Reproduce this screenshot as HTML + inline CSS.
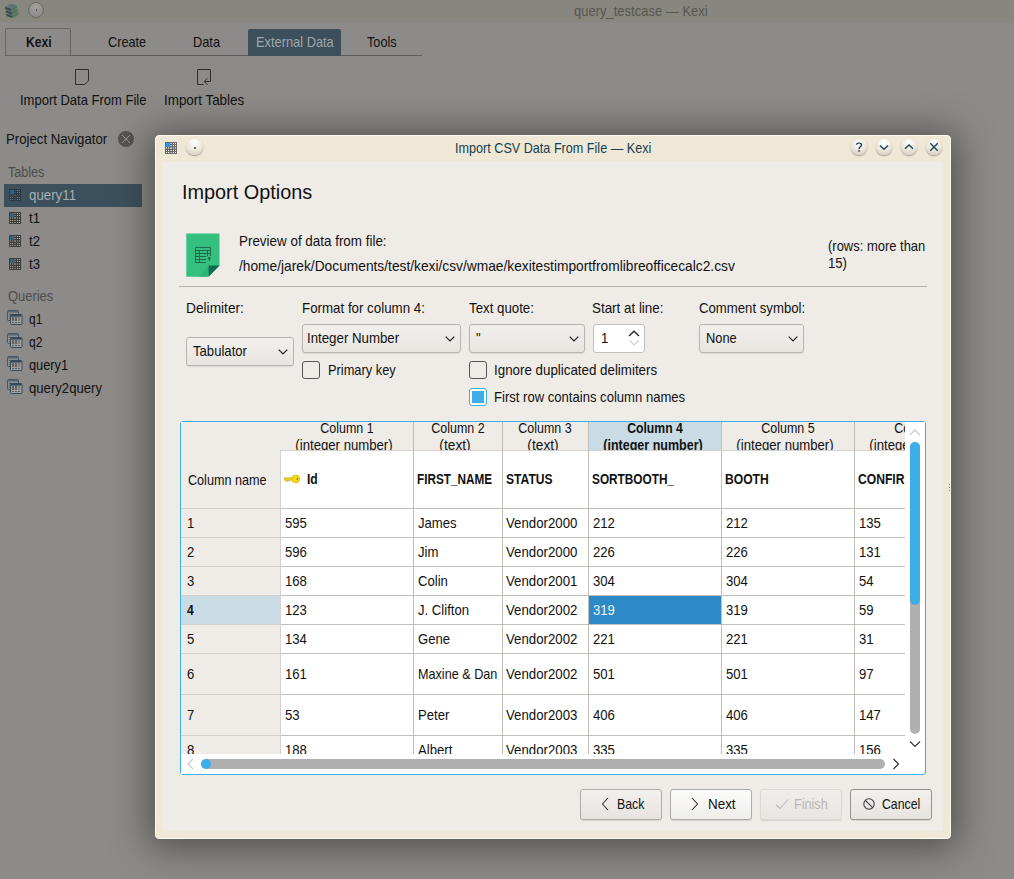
<!DOCTYPE html><html><head><meta charset="utf-8"><style>
*{margin:0;padding:0;box-sizing:border-box}
html,body{width:1014px;height:879px;overflow:hidden;background:#8c8b89;font-family:"Liberation Sans",sans-serif}
.t{position:absolute;white-space:nowrap;line-height:normal;transform-origin:0 0}
.r{position:absolute}
svg{position:absolute;overflow:visible}
</style></head><body><div class="r" style="left:0px;top:0px;width:1014px;height:22px;background:#87867f"></div>
<div class="t" style="left:573.50px;top:2.9000000000000004px;font-size:14.5px;color:#57564f;font-weight:normal;transform:scaleX(0.8967);">query_testcase — Kexi</div>
<svg style="left:0px;top:-1px" width="22" height="20" viewBox="0 0 22 20"><path d="M6.5 15 L12.5 11.5 L18.5 13.5 L12.5 17 Z" fill="#5f7378"/><path d="M6.5 15 L12.5 17 L12.5 19 L6.5 17 Z" fill="#34494f"/><path d="M12.5 17 L18.5 13.5 L18.5 15.5 L12.5 19 Z" fill="#4f7650"/><path d="M5.8 11.5 L11.8 8.0 L17.8 10.0 L11.8 13.5 Z" fill="#5f7378"/><path d="M5.8 11.5 L11.8 13.5 L11.8 15.5 L5.8 13.5 Z" fill="#34494f"/><path d="M11.8 13.5 L17.8 10.0 L17.8 12.0 L11.8 15.5 Z" fill="#4f7650"/><path d="M5 8 L11 4.5 L17 6.5 L11 10 Z" fill="#5f7378"/><path d="M5 8 L11 10 L11 12 L5 10 Z" fill="#34494f"/><path d="M11 10 L17 6.5 L17 8.5 L11 12 Z" fill="#4f7650"/></svg>
<div class="r" style="left:28px;top:1.5px;width:16px;height:16px;border-radius:50%;border:1px solid #6a6964;background:radial-gradient(circle at 50% 25%,#a2a19d,#8e8d89 70%,#858480)"></div>
<div class="r" style="left:35.5px;top:8.8px;width:1.2px;height:2px;background:#4a4a48;border-radius:1px"></div>
<div class="r" style="left:5px;top:55px;width:417px;height:1px;background:#5e5d59"></div>
<div class="r" style="left:5px;top:28px;width:66px;height:28px;border:1px solid #676662;border-radius:2px;background:#8c8b89"></div>
<div class="t" style="left:25.60px;top:34.3px;font-size:14.5px;color:#141414;font-weight:bold;transform:scaleX(0.8345);">Kexi</div>
<div class="t" style="left:107.80px;top:34.3px;font-size:14.5px;color:#111111;font-weight:normal;transform:scaleX(0.8744);">Create</div>
<div class="t" style="left:193.00px;top:34.3px;font-size:14.5px;color:#111111;font-weight:normal;transform:scaleX(0.8834);">Data</div>
<div class="r" style="left:248px;top:29px;width:93px;height:27px;background:#3b4f5d;border-radius:2px 2px 0 0"></div>
<div class="t" style="left:255.60px;top:34.3px;font-size:14.5px;color:#9ea7aa;font-weight:normal;transform:scaleX(0.8851);">External Data</div>
<div class="t" style="left:366.90px;top:34.3px;font-size:14.5px;color:#111111;font-weight:normal;transform:scaleX(0.8780);">Tools</div>
<svg style="left:74px;top:68px" width="16" height="18" viewBox="0 0 16 18"><path d="M1.5 1.5 H14.5 V12.8 L10.8 16.5 H1.5 Z" fill="none" stroke="#2e2e2e" stroke-width="1"/></svg>
<div class="t" style="left:19.50px;top:91.6px;font-size:14.5px;color:#111111;font-weight:normal;transform:scaleX(0.8968);">Import Data From File</div>
<svg style="left:196px;top:68px" width="16" height="18" viewBox="0 0 16 18"><path d="M7.7 16.5 H1.5 V1.5 H14.5 V13.5 H8.5" fill="none" stroke="#2e2e2e" stroke-width="1"/><path d="M11.5 10.2 L8.3 13.5 L11.5 16.8" fill="none" stroke="#2e2e2e" stroke-width="1"/></svg>
<div class="t" style="left:164.00px;top:91.6px;font-size:14.5px;color:#111111;font-weight:normal;transform:scaleX(0.9244);">Import Tables</div>
<div class="t" style="left:6.00px;top:131px;font-size:14.5px;color:#111111;font-weight:normal;transform:scaleX(0.9095);">Project Navigator</div>
<div class="r" style="left:118px;top:131px;width:16px;height:16px;border-radius:50%;background:#555452"></div>
<svg style="left:118px;top:131px" width="16" height="16" viewBox="0 0 16 16"><path d="M4 4 L12 12 M12 4 L4 12" stroke="#a3a29e" stroke-width="0.9"/></svg>
<div class="t" style="left:7.50px;top:164.1px;font-size:14.5px;color:#4d4c49;font-weight:normal;transform:scaleX(0.8641);">Tables</div>
<div class="r" style="left:4px;top:184px;width:138px;height:23px;background:#3b4f5c"></div>
<svg style="left:9px;top:189px" width="12" height="12" viewBox="0 0 12 12"><rect x="0" y="0" width="12" height="12" fill="#2c3a44"/><rect x="1" y="1" width="1" height="1" fill="#6a7c88"/><rect x="1" y="3" width="1" height="1" fill="#6a7c88"/><rect x="1" y="8" width="1" height="1" fill="#6a7c88"/><rect x="1" y="10" width="1" height="1" fill="#6a7c88"/><rect x="3" y="1" width="1" height="1" fill="#6a7c88"/><rect x="3" y="3" width="1" height="1" fill="#6a7c88"/><rect x="3" y="8" width="1" height="1" fill="#6a7c88"/><rect x="3" y="10" width="1" height="1" fill="#6a7c88"/><rect x="8" y="1" width="1" height="1" fill="#6a7c88"/><rect x="8" y="3" width="1" height="1" fill="#6a7c88"/><rect x="8" y="8" width="1" height="1" fill="#6a7c88"/><rect x="8" y="10" width="1" height="1" fill="#6a7c88"/><rect x="10" y="1" width="1" height="1" fill="#6a7c88"/><rect x="10" y="3" width="1" height="1" fill="#6a7c88"/><rect x="10" y="8" width="1" height="1" fill="#6a7c88"/><rect x="10" y="10" width="1" height="1" fill="#6a7c88"/><rect x="5" y="1" width="2" height="1" fill="#3f505c"/><rect x="1" y="5" width="1" height="2" fill="#3f505c"/><rect x="5" y="3" width="2" height="1" fill="#3f505c"/><rect x="3" y="5" width="1" height="2" fill="#3f505c"/><rect x="5" y="8" width="2" height="1" fill="#3f505c"/><rect x="8" y="5" width="1" height="2" fill="#3f505c"/><rect x="5" y="10" width="2" height="1" fill="#3f505c"/><rect x="10" y="5" width="1" height="2" fill="#3f505c"/><rect x="5" y="5" width="2" height="2" fill="#3f505c"/><rect x="1" y="1" width="4" height="4" fill="#2f5e80"/></svg>
<div class="t" style="left:29.30px;top:186.8px;font-size:14.5px;color:#a7b0b3;font-weight:normal;transform:scaleX(0.9169);">query11</div>
<svg style="left:9px;top:212px" width="12" height="12" viewBox="0 0 12 12"><rect x="0" y="0" width="12" height="12" fill="#3e3e3c"/><rect x="1" y="1" width="1" height="1" fill="#a9a9a6"/><rect x="1" y="3" width="1" height="1" fill="#a9a9a6"/><rect x="1" y="8" width="1" height="1" fill="#a9a9a6"/><rect x="1" y="10" width="1" height="1" fill="#a9a9a6"/><rect x="3" y="1" width="1" height="1" fill="#a9a9a6"/><rect x="3" y="3" width="1" height="1" fill="#a9a9a6"/><rect x="3" y="8" width="1" height="1" fill="#a9a9a6"/><rect x="3" y="10" width="1" height="1" fill="#a9a9a6"/><rect x="8" y="1" width="1" height="1" fill="#a9a9a6"/><rect x="8" y="3" width="1" height="1" fill="#a9a9a6"/><rect x="8" y="8" width="1" height="1" fill="#a9a9a6"/><rect x="8" y="10" width="1" height="1" fill="#a9a9a6"/><rect x="10" y="1" width="1" height="1" fill="#a9a9a6"/><rect x="10" y="3" width="1" height="1" fill="#a9a9a6"/><rect x="10" y="8" width="1" height="1" fill="#a9a9a6"/><rect x="10" y="10" width="1" height="1" fill="#a9a9a6"/><rect x="5" y="1" width="2" height="1" fill="#77766f"/><rect x="1" y="5" width="1" height="2" fill="#77766f"/><rect x="5" y="3" width="2" height="1" fill="#77766f"/><rect x="3" y="5" width="1" height="2" fill="#77766f"/><rect x="5" y="8" width="2" height="1" fill="#77766f"/><rect x="8" y="5" width="1" height="2" fill="#77766f"/><rect x="5" y="10" width="2" height="1" fill="#77766f"/><rect x="10" y="5" width="1" height="2" fill="#77766f"/><rect x="5" y="5" width="2" height="2" fill="#77766f"/><rect x="1" y="1" width="4" height="4" fill="#35607f"/></svg>
<div class="t" style="left:29.30px;top:210.2px;font-size:14.5px;color:#111111;font-weight:normal;transform:scaleX(0.9050);">t1</div>
<svg style="left:9px;top:235px" width="12" height="12" viewBox="0 0 12 12"><rect x="0" y="0" width="12" height="12" fill="#3e3e3c"/><rect x="1" y="1" width="1" height="1" fill="#a9a9a6"/><rect x="1" y="3" width="1" height="1" fill="#a9a9a6"/><rect x="1" y="8" width="1" height="1" fill="#a9a9a6"/><rect x="1" y="10" width="1" height="1" fill="#a9a9a6"/><rect x="3" y="1" width="1" height="1" fill="#a9a9a6"/><rect x="3" y="3" width="1" height="1" fill="#a9a9a6"/><rect x="3" y="8" width="1" height="1" fill="#a9a9a6"/><rect x="3" y="10" width="1" height="1" fill="#a9a9a6"/><rect x="8" y="1" width="1" height="1" fill="#a9a9a6"/><rect x="8" y="3" width="1" height="1" fill="#a9a9a6"/><rect x="8" y="8" width="1" height="1" fill="#a9a9a6"/><rect x="8" y="10" width="1" height="1" fill="#a9a9a6"/><rect x="10" y="1" width="1" height="1" fill="#a9a9a6"/><rect x="10" y="3" width="1" height="1" fill="#a9a9a6"/><rect x="10" y="8" width="1" height="1" fill="#a9a9a6"/><rect x="10" y="10" width="1" height="1" fill="#a9a9a6"/><rect x="5" y="1" width="2" height="1" fill="#77766f"/><rect x="1" y="5" width="1" height="2" fill="#77766f"/><rect x="5" y="3" width="2" height="1" fill="#77766f"/><rect x="3" y="5" width="1" height="2" fill="#77766f"/><rect x="5" y="8" width="2" height="1" fill="#77766f"/><rect x="8" y="5" width="1" height="2" fill="#77766f"/><rect x="5" y="10" width="2" height="1" fill="#77766f"/><rect x="10" y="5" width="1" height="2" fill="#77766f"/><rect x="5" y="5" width="2" height="2" fill="#77766f"/><rect x="1" y="1" width="4" height="4" fill="#35607f"/></svg>
<div class="t" style="left:29.30px;top:233.2px;font-size:14.5px;color:#111111;font-weight:normal;transform:scaleX(0.9050);">t2</div>
<svg style="left:9px;top:258px" width="12" height="12" viewBox="0 0 12 12"><rect x="0" y="0" width="12" height="12" fill="#3e3e3c"/><rect x="1" y="1" width="1" height="1" fill="#a9a9a6"/><rect x="1" y="3" width="1" height="1" fill="#a9a9a6"/><rect x="1" y="8" width="1" height="1" fill="#a9a9a6"/><rect x="1" y="10" width="1" height="1" fill="#a9a9a6"/><rect x="3" y="1" width="1" height="1" fill="#a9a9a6"/><rect x="3" y="3" width="1" height="1" fill="#a9a9a6"/><rect x="3" y="8" width="1" height="1" fill="#a9a9a6"/><rect x="3" y="10" width="1" height="1" fill="#a9a9a6"/><rect x="8" y="1" width="1" height="1" fill="#a9a9a6"/><rect x="8" y="3" width="1" height="1" fill="#a9a9a6"/><rect x="8" y="8" width="1" height="1" fill="#a9a9a6"/><rect x="8" y="10" width="1" height="1" fill="#a9a9a6"/><rect x="10" y="1" width="1" height="1" fill="#a9a9a6"/><rect x="10" y="3" width="1" height="1" fill="#a9a9a6"/><rect x="10" y="8" width="1" height="1" fill="#a9a9a6"/><rect x="10" y="10" width="1" height="1" fill="#a9a9a6"/><rect x="5" y="1" width="2" height="1" fill="#77766f"/><rect x="1" y="5" width="1" height="2" fill="#77766f"/><rect x="5" y="3" width="2" height="1" fill="#77766f"/><rect x="3" y="5" width="1" height="2" fill="#77766f"/><rect x="5" y="8" width="2" height="1" fill="#77766f"/><rect x="8" y="5" width="1" height="2" fill="#77766f"/><rect x="5" y="10" width="2" height="1" fill="#77766f"/><rect x="10" y="5" width="1" height="2" fill="#77766f"/><rect x="5" y="5" width="2" height="2" fill="#77766f"/><rect x="1" y="1" width="4" height="4" fill="#35607f"/></svg>
<div class="t" style="left:29.30px;top:256.2px;font-size:14.5px;color:#111111;font-weight:normal;transform:scaleX(0.9050);">t3</div>
<div class="t" style="left:7.50px;top:287.6px;font-size:14.5px;color:#4d4c49;font-weight:normal;transform:scaleX(0.8907);">Queries</div>
<svg style="left:7px;top:310px" width="16" height="16" viewBox="0 0 16 16"><rect x="0.5" y="0.5" width="11" height="10" rx="1" fill="#8e8d8a" stroke="#48545e" stroke-width="1"/><rect x="1" y="1" width="10" height="1.5" fill="#5b6772"/><path d="M2.5 4.5h2M2.5 6.5h1M2.5 8.5h1" stroke="#3a3a3a"/><rect x="3.5" y="4.5" width="11.5" height="10" rx="1" fill="#a09f9b" stroke="#34495c" stroke-width="1"/><rect x="4" y="5" width="10.5" height="1.6" fill="#34495c"/><path d="M5 8h2M8 8h2M5 10h2M8 10h2" stroke="#222" stroke-width="1.1"/><path d="M11 8h2M11 10h2M5 12.5h2M8 12.5h2M11 12.5h2" stroke="#555" stroke-width="0.9"/></svg>
<div class="t" style="left:29.30px;top:310.8px;font-size:14.5px;color:#111111;font-weight:normal;transform:scaleX(0.8279);">q1</div>
<svg style="left:7px;top:333px" width="16" height="16" viewBox="0 0 16 16"><rect x="0.5" y="0.5" width="11" height="10" rx="1" fill="#8e8d8a" stroke="#48545e" stroke-width="1"/><rect x="1" y="1" width="10" height="1.5" fill="#5b6772"/><path d="M2.5 4.5h2M2.5 6.5h1M2.5 8.5h1" stroke="#3a3a3a"/><rect x="3.5" y="4.5" width="11.5" height="10" rx="1" fill="#a09f9b" stroke="#34495c" stroke-width="1"/><rect x="4" y="5" width="10.5" height="1.6" fill="#34495c"/><path d="M5 8h2M8 8h2M5 10h2M8 10h2" stroke="#222" stroke-width="1.1"/><path d="M11 8h2M11 10h2M5 12.5h2M8 12.5h2M11 12.5h2" stroke="#555" stroke-width="0.9"/></svg>
<div class="t" style="left:29.30px;top:333.8px;font-size:14.5px;color:#111111;font-weight:normal;transform:scaleX(0.8279);">q2</div>
<svg style="left:7px;top:356px" width="16" height="16" viewBox="0 0 16 16"><rect x="0.5" y="0.5" width="11" height="10" rx="1" fill="#8e8d8a" stroke="#48545e" stroke-width="1"/><rect x="1" y="1" width="10" height="1.5" fill="#5b6772"/><path d="M2.5 4.5h2M2.5 6.5h1M2.5 8.5h1" stroke="#3a3a3a"/><rect x="3.5" y="4.5" width="11.5" height="10" rx="1" fill="#a09f9b" stroke="#34495c" stroke-width="1"/><rect x="4" y="5" width="10.5" height="1.6" fill="#34495c"/><path d="M5 8h2M8 8h2M5 10h2M8 10h2" stroke="#222" stroke-width="1.1"/><path d="M11 8h2M11 10h2M5 12.5h2M8 12.5h2M11 12.5h2" stroke="#555" stroke-width="0.9"/></svg>
<div class="t" style="left:29.30px;top:356.8px;font-size:14.5px;color:#111111;font-weight:normal;transform:scaleX(0.8809);">query1</div>
<svg style="left:7px;top:379px" width="16" height="16" viewBox="0 0 16 16"><rect x="0.5" y="0.5" width="11" height="10" rx="1" fill="#8e8d8a" stroke="#48545e" stroke-width="1"/><rect x="1" y="1" width="10" height="1.5" fill="#5b6772"/><path d="M2.5 4.5h2M2.5 6.5h1M2.5 8.5h1" stroke="#3a3a3a"/><rect x="3.5" y="4.5" width="11.5" height="10" rx="1" fill="#a09f9b" stroke="#34495c" stroke-width="1"/><rect x="4" y="5" width="10.5" height="1.6" fill="#34495c"/><path d="M5 8h2M8 8h2M5 10h2M8 10h2" stroke="#222" stroke-width="1.1"/><path d="M11 8h2M11 10h2M5 12.5h2M8 12.5h2M11 12.5h2" stroke="#555" stroke-width="0.9"/></svg>
<div class="t" style="left:29.30px;top:379.8px;font-size:14.5px;color:#111111;font-weight:normal;transform:scaleX(0.9059);">query2query</div>
<div class="r" style="left:155px;top:135px;width:796px;height:704px;background:#efe8d7;border-radius:4px;box-shadow:0 3px 36px 6px rgba(42,40,34,.6);border:1px solid #fcf9f0"></div>
<div class="r" style="left:163px;top:162px;width:780px;height:669px;background:#efebe7"></div>
<svg style="left:165px;top:142px" width="12" height="12" viewBox="0 0 12 12"><rect x="0" y="0" width="12" height="12" fill="#6a6a6a"/><rect x="1" y="1" width="1" height="1" fill="#ffffff"/><rect x="1" y="3" width="1" height="1" fill="#ffffff"/><rect x="1" y="8" width="1" height="1" fill="#ffffff"/><rect x="1" y="10" width="1" height="1" fill="#ffffff"/><rect x="3" y="1" width="1" height="1" fill="#ffffff"/><rect x="3" y="3" width="1" height="1" fill="#ffffff"/><rect x="3" y="8" width="1" height="1" fill="#ffffff"/><rect x="3" y="10" width="1" height="1" fill="#ffffff"/><rect x="8" y="1" width="1" height="1" fill="#ffffff"/><rect x="8" y="3" width="1" height="1" fill="#ffffff"/><rect x="8" y="8" width="1" height="1" fill="#ffffff"/><rect x="8" y="10" width="1" height="1" fill="#ffffff"/><rect x="10" y="1" width="1" height="1" fill="#ffffff"/><rect x="10" y="3" width="1" height="1" fill="#ffffff"/><rect x="10" y="8" width="1" height="1" fill="#ffffff"/><rect x="10" y="10" width="1" height="1" fill="#ffffff"/><rect x="5" y="1" width="2" height="1" fill="#b9b4aa"/><rect x="1" y="5" width="1" height="2" fill="#b9b4aa"/><rect x="5" y="3" width="2" height="1" fill="#b9b4aa"/><rect x="3" y="5" width="1" height="2" fill="#b9b4aa"/><rect x="5" y="8" width="2" height="1" fill="#b9b4aa"/><rect x="8" y="5" width="1" height="2" fill="#b9b4aa"/><rect x="5" y="10" width="2" height="1" fill="#b9b4aa"/><rect x="10" y="5" width="1" height="2" fill="#b9b4aa"/><rect x="5" y="5" width="2" height="2" fill="#b9b4aa"/><rect x="1" y="1" width="4" height="4" fill="#1e9bf5"/></svg>
<div class="r" style="left:186px;top:139px;width:17px;height:16px;border-radius:50%;background:radial-gradient(circle at 50% 20%,#ffffff,#ebe6da 55%,#cfc9ba);box-shadow:0 1px 1.5px rgba(0,0,0,.35)"></div>
<div class="r" style="left:194px;top:146.5px;width:2px;height:2px;background:#1f4656;border-radius:1px"></div>
<div class="t" style="left:455.40px;top:140.2px;font-size:14.5px;color:#173f4f;font-weight:normal;transform:scaleX(0.8704);">Import CSV Data From File — Kexi</div>
<div class="r" style="left:851px;top:139px;width:16px;height:16px;border-radius:50%;background:radial-gradient(circle at 50% 20%,#ffffff,#ebe6da 55%,#cdc7b8);box-shadow:0 1px 1.5px rgba(0,0,0,.35)"></div>
<svg style="left:851px;top:139px" width="16" height="16" viewBox="0 0 16 16"><path d="M5.5 5.8 C5.5 3.5 10.5 3.5 10.5 6 C10.5 7.8 8 7.8 8 10" fill="none" stroke="#1f4656" stroke-width="1.4"/><rect x="7.2" y="11.2" width="1.6" height="1.6" fill="#1f4656"/></svg>
<div class="r" style="left:876px;top:139px;width:16px;height:16px;border-radius:50%;background:radial-gradient(circle at 50% 20%,#ffffff,#ebe6da 55%,#cdc7b8);box-shadow:0 1px 1.5px rgba(0,0,0,.35)"></div>
<svg style="left:876px;top:139px" width="16" height="16" viewBox="0 0 16 16"><path d="M4 6.5 L8 10.3 L12 6.5" fill="none" stroke="#1f4656" stroke-width="1.4"/></svg>
<div class="r" style="left:901px;top:139px;width:16px;height:16px;border-radius:50%;background:radial-gradient(circle at 50% 20%,#ffffff,#ebe6da 55%,#cdc7b8);box-shadow:0 1px 1.5px rgba(0,0,0,.35)"></div>
<svg style="left:901px;top:139px" width="16" height="16" viewBox="0 0 16 16"><path d="M4 9.8 L8 6 L12 9.8" fill="none" stroke="#1f4656" stroke-width="1.4"/></svg>
<div class="r" style="left:926px;top:139px;width:16px;height:16px;border-radius:50%;background:radial-gradient(circle at 50% 20%,#ffffff,#ebe6da 55%,#cdc7b8);box-shadow:0 1px 1.5px rgba(0,0,0,.35)"></div>
<svg style="left:926px;top:139px" width="16" height="16" viewBox="0 0 16 16"><path d="M4.3 4.3 L11.7 11.7 M11.7 4.3 L4.3 11.7" fill="none" stroke="#1f4656" stroke-width="1.4"/></svg>
<div class="t" style="left:181.50px;top:181.2px;font-size:20.3px;color:#111111;font-weight:normal;transform:scaleX(0.9783);">Import Options</div>
<svg style="left:186px;top:233px" width="34" height="44" viewBox="0 0 34 44"><path d="M0.3 0.5 H33.5 V32.5 L22.5 43.8 H0.3 Z" fill="#36c07f"/>
<path d="M33.5 32.5 L22.5 43.8 V32.5 Z" fill="#116c4f"/>
<path d="M13 43.8 L22.5 32.5 L22.5 43.8 Z" fill="#2aa86f" opacity="0.55"/>
<g fill="none" stroke="#1a6b4c" stroke-width="1">
<path d="M9.5 14.5 H24.5 V23 M9.5 14.5 V29.5 H20 M9.5 17.5 H24.5 M9.5 20.5 H24.5 M9.5 23.5 H20 M9.5 26.5 H20 M13.5 17.5 V29.5 M21.5 17.5 V23.5"/></g>
<circle cx="23.3" cy="25.3" r="1.3" fill="#1a6b4c"/><path d="M23.8 25.5 L23.2 28" stroke="#1a6b4c" stroke-width="1"/></svg>
<div class="t" style="left:239.00px;top:232.7px;font-size:14.5px;color:#111111;font-weight:normal;transform:scaleX(0.9249);">Preview of data from file:</div>
<div class="t" style="left:239.40px;top:257.6px;font-size:14.5px;color:#111111;font-weight:normal;transform:scaleX(0.9485);">/home/jarek/Documents/test/kexi/csv/wmae/kexitestimportfromlibreofficecalc2.csv</div>
<div class="t" style="left:827.80px;top:238.4px;font-size:14.5px;color:#111111;font-weight:normal;transform:scaleX(0.8940);">(rows: more than</div>
<div class="t" style="left:827.80px;top:254.89999999999998px;font-size:14.5px;color:#111111;font-weight:normal;transform:scaleX(0.9050);">15)</div>
<div class="r" style="left:179px;top:286px;width:748px;height:1px;background:#b3b0ab"></div>
<div class="t" style="left:185.70px;top:300.1px;font-size:14.5px;color:#111111;font-weight:normal;transform:scaleX(0.9459);">Delimiter:</div>
<div class="t" style="left:301.70px;top:299.8px;font-size:14.5px;color:#111111;font-weight:normal;transform:scaleX(0.9185);">Format for column 4:</div>
<div class="t" style="left:468.70px;top:299.8px;font-size:14.5px;color:#111111;font-weight:normal;transform:scaleX(0.9155);">Text quote:</div>
<div class="t" style="left:592.30px;top:299.8px;font-size:14.5px;color:#111111;font-weight:normal;transform:scaleX(0.9235);">Start at line:</div>
<div class="t" style="left:698.60px;top:300.1px;font-size:14.5px;color:#111111;font-weight:normal;transform:scaleX(0.9084);">Comment symbol:</div>
<div class="r" style="left:186px;top:337px;width:108px;height:29px;border:1px solid #b8b5b0;border-radius:3px;background:linear-gradient(#f2f0ed,#e8e5e1);box-shadow:0 1px 1px rgba(0,0,0,.08)"></div>
<div class="t" style="left:192.50px;top:343px;font-size:14.5px;color:#111111;font-weight:normal;transform:scaleX(0.9044);">Tabulator</div>
<svg style="left:278px;top:349px" width="10" height="6" viewBox="0 0 10 6"><path d="M0.7 0.7 L5 5 L9.3 0.7" fill="none" stroke="#222" stroke-width="1.2"/></svg>
<div class="r" style="left:302px;top:324px;width:159px;height:29px;border:1px solid #b8b5b0;border-radius:3px;background:linear-gradient(#f2f0ed,#e8e5e1);box-shadow:0 1px 1px rgba(0,0,0,.08)"></div>
<div class="t" style="left:307.30px;top:330px;font-size:14.5px;color:#111111;font-weight:normal;transform:scaleX(0.9148);">Integer Number</div>
<svg style="left:445px;top:336px" width="10" height="6" viewBox="0 0 10 6"><path d="M0.7 0.7 L5 5 L9.3 0.7" fill="none" stroke="#222" stroke-width="1.2"/></svg>
<div class="r" style="left:469px;top:324px;width:116px;height:29px;border:1px solid #b8b5b0;border-radius:3px;background:linear-gradient(#f2f0ed,#e8e5e1);box-shadow:0 1px 1px rgba(0,0,0,.08)"></div>
<div class="t" style="left:475.50px;top:330px;font-size:14.5px;color:#111111;font-weight:normal;transform:scaleX(0.9050);">"</div>
<svg style="left:569px;top:336px" width="10" height="6" viewBox="0 0 10 6"><path d="M0.7 0.7 L5 5 L9.3 0.7" fill="none" stroke="#222" stroke-width="1.2"/></svg>
<div class="r" style="left:699px;top:324px;width:105px;height:29px;border:1px solid #b8b5b0;border-radius:3px;background:linear-gradient(#f2f0ed,#e8e5e1);box-shadow:0 1px 1px rgba(0,0,0,.08)"></div>
<div class="t" style="left:705.50px;top:330px;font-size:14.5px;color:#111111;font-weight:normal;transform:scaleX(0.8869);">None</div>
<svg style="left:788px;top:336px" width="10" height="6" viewBox="0 0 10 6"><path d="M0.7 0.7 L5 5 L9.3 0.7" fill="none" stroke="#222" stroke-width="1.2"/></svg>
<div class="r" style="left:593px;top:324px;width:52px;height:29px;border:1px solid #c3c0bb;border-radius:3px;background:#fff"></div>
<div class="t" style="left:600.60px;top:330px;font-size:14.5px;color:#111111;font-weight:normal;transform:scaleX(0.9050);">1</div>
<svg style="left:628px;top:330px" width="12" height="16" viewBox="0 0 12 16"><path d="M1 6 L6 1.2 L11 6" fill="none" stroke="#222" stroke-width="1.3"/><path d="M1.5 10.5 L6 14.8 L10.5 10.5" fill="none" stroke="#c8c8c8" stroke-width="1.1"/></svg>
<div class="r" style="left:302px;top:361px;width:18px;height:18px;border:1px solid #555;border-radius:3px;background:transparent"></div>
<div class="t" style="left:327.50px;top:361.5px;font-size:14.5px;color:#111111;font-weight:normal;transform:scaleX(0.8848);">Primary key</div>
<div class="r" style="left:469px;top:361px;width:18px;height:18px;border:1px solid #555;border-radius:3px;background:transparent"></div>
<div class="t" style="left:494.30px;top:361.8px;font-size:14.5px;color:#111111;font-weight:normal;transform:scaleX(0.9201);">Ignore duplicated delimiters</div>
<div class="r" style="left:469px;top:388px;width:18px;height:18px;border:1px solid #3daee9;border-radius:3px;background:#fbfbfb"></div>
<div class="r" style="left:472px;top:391px;width:12px;height:12px;background:#3daee9"></div>
<div class="t" style="left:494.30px;top:388.7px;font-size:14.5px;color:#111111;font-weight:normal;transform:scaleX(0.9018);">First row contains column names</div>
<div class="r" style="left:180px;top:421px;width:746px;height:354px;border:1px solid #3daee9;border-radius:3px;background:#fff"></div>
<div class="r" style="left:181px;top:422px;width:724px;height:332px;overflow:hidden;background:#fff">
<div class="r" style="left:0px;top:0px;width:800px;height:28px;background:#efebe7"></div>
<div class="r" style="left:408px;top:0px;width:132px;height:28px;background:#c9dbe4"></div>
<div class="r" style="left:0px;top:28px;width:99px;height:320px;background:#efebe7"></div>
<div class="r" style="left:0px;top:174px;width:99px;height:28px;background:#c9dbe4"></div>
<div class="r" style="left:408px;top:174px;width:132px;height:28px;background:#2e8ac7"></div>
<div class="r" style="left:232px;top:0px;width:1px;height:340px;background:#c0bdb9"></div>
<div class="r" style="left:321px;top:0px;width:1px;height:340px;background:#c0bdb9"></div>
<div class="r" style="left:407px;top:0px;width:1px;height:340px;background:#c0bdb9"></div>
<div class="r" style="left:540px;top:0px;width:1px;height:340px;background:#c0bdb9"></div>
<div class="r" style="left:673px;top:0px;width:1px;height:340px;background:#c0bdb9"></div>
<div class="r" style="left:806px;top:0px;width:1px;height:340px;background:#c0bdb9"></div>
<div class="r" style="left:0px;top:86px;width:99px;height:1px;background:#d5d1cd"></div>
<div class="r" style="left:100px;top:86px;width:800px;height:1px;background:#c0bdb9"></div>
<div class="r" style="left:0px;top:115px;width:99px;height:1px;background:#d5d1cd"></div>
<div class="r" style="left:100px;top:115px;width:800px;height:1px;background:#c0bdb9"></div>
<div class="r" style="left:0px;top:144px;width:99px;height:1px;background:#d5d1cd"></div>
<div class="r" style="left:100px;top:144px;width:800px;height:1px;background:#c0bdb9"></div>
<div class="r" style="left:0px;top:173px;width:99px;height:1px;background:#d5d1cd"></div>
<div class="r" style="left:100px;top:173px;width:800px;height:1px;background:#c0bdb9"></div>
<div class="r" style="left:0px;top:202px;width:99px;height:1px;background:#d5d1cd"></div>
<div class="r" style="left:100px;top:202px;width:800px;height:1px;background:#c0bdb9"></div>
<div class="r" style="left:0px;top:231px;width:99px;height:1px;background:#d5d1cd"></div>
<div class="r" style="left:100px;top:231px;width:800px;height:1px;background:#c0bdb9"></div>
<div class="r" style="left:0px;top:272px;width:99px;height:1px;background:#d5d1cd"></div>
<div class="r" style="left:100px;top:272px;width:800px;height:1px;background:#c0bdb9"></div>
<div class="r" style="left:0px;top:313px;width:99px;height:1px;background:#d5d1cd"></div>
<div class="r" style="left:100px;top:313px;width:800px;height:1px;background:#c0bdb9"></div>
<div class="t" style="left:15.80px;width:300px;text-align:center;transform-origin:50% 0;top:-2.1999999999999886px;font-size:14.5px;color:#111111;font-weight:normal;transform:scaleX(0.8582);">Column 1</div>
<div class="t" style="left:13.20px;width:300px;text-align:center;transform-origin:50% 0;top:15.300000000000011px;font-size:14.5px;color:#111111;font-weight:normal;transform:scaleX(0.9073);">(integer number)</div>
<div class="t" style="left:126.80px;width:300px;text-align:center;transform-origin:50% 0;top:-2.1999999999999886px;font-size:14.5px;color:#111111;font-weight:normal;transform:scaleX(0.8582);">Column 2</div>
<div class="t" style="left:124.20px;width:300px;text-align:center;transform-origin:50% 0;top:15.300000000000011px;font-size:14.5px;color:#111111;font-weight:normal;transform:scaleX(0.9503);">(text)</div>
<div class="t" style="left:214.30px;width:300px;text-align:center;transform-origin:50% 0;top:-2.1999999999999886px;font-size:14.5px;color:#111111;font-weight:normal;transform:scaleX(0.8582);">Column 3</div>
<div class="t" style="left:211.70px;width:300px;text-align:center;transform-origin:50% 0;top:15.300000000000011px;font-size:14.5px;color:#111111;font-weight:normal;transform:scaleX(0.9503);">(text)</div>
<div class="t" style="left:323.90px;width:300px;text-align:center;transform-origin:50% 0;top:-2.1999999999999886px;font-size:14.5px;color:#111111;font-weight:bold;transform:scaleX(0.8425);">Column 4</div>
<div class="t" style="left:322.00px;width:300px;text-align:center;transform-origin:50% 0;top:15.300000000000011px;font-size:14.5px;color:#111111;font-weight:bold;transform:scaleX(0.8624);">(integer number)</div>
<div class="t" style="left:456.80px;width:300px;text-align:center;transform-origin:50% 0;top:-2.1999999999999886px;font-size:14.5px;color:#111111;font-weight:normal;transform:scaleX(0.8582);">Column 5</div>
<div class="t" style="left:454.20px;width:300px;text-align:center;transform-origin:50% 0;top:15.300000000000011px;font-size:14.5px;color:#111111;font-weight:normal;transform:scaleX(0.9073);">(integer number)</div>
<div class="t" style="left:589.80px;width:300px;text-align:center;transform-origin:50% 0;top:-2.1999999999999886px;font-size:14.5px;color:#111111;font-weight:normal;transform:scaleX(0.8582);">Column 6</div>
<div class="t" style="left:587.20px;width:300px;text-align:center;transform-origin:50% 0;top:15.300000000000011px;font-size:14.5px;color:#111111;font-weight:normal;transform:scaleX(0.9073);">(integer number)</div>
<div class="r" style="left:100px;top:28px;width:800px;height:58px;background:#fff"></div>
<div class="r" style="left:99px;top:28px;width:1px;height:58px;background:#d5d1cd"></div>
<div class="r" style="left:99px;top:28px;width:800px;height:1px;background:#d5d1cd"></div>
<div class="r" style="left:99px;top:86px;width:1px;height:260px;background:#d5d1cd"></div>
<div class="r" style="left:232px;top:28px;width:1px;height:58px;background:#c0bdb9"></div>
<div class="r" style="left:321px;top:28px;width:1px;height:58px;background:#c0bdb9"></div>
<div class="r" style="left:407px;top:28px;width:1px;height:58px;background:#c0bdb9"></div>
<div class="r" style="left:540px;top:28px;width:1px;height:58px;background:#c0bdb9"></div>
<div class="r" style="left:673px;top:28px;width:1px;height:58px;background:#c0bdb9"></div>
<div class="t" style="left:6.60px;top:49.89999999999998px;font-size:14.5px;color:#111111;font-weight:normal;transform:scaleX(0.8692);">Column name</div>
<svg style="left:103px;top:52px" width="16" height="10" viewBox="0 0 16 10"><path d="M0.3 3.7 H9 V6.2 H5.5 V7.2 H4.5 V6.2 H3.5 V7.4 H2.2 V6.2 H0.3 Z" fill="#f0d21c" stroke="#b59c2e" stroke-width="0.5"/><circle cx="11.8" cy="4.9" r="3.9" fill="#f8dc12" stroke="#c9a90c" stroke-width="0.6"/><circle cx="13.4" cy="5" r="0.9" fill="#8c7d40"/></svg>
<div class="t" style="left:125.80px;top:48.80000000000001px;font-size:14.5px;color:#111111;font-weight:bold;transform:scaleX(0.8350);">Id</div>
<div class="t" style="left:236.00px;top:48.80000000000001px;font-size:14.5px;color:#111111;font-weight:bold;transform:scaleX(0.8099);">FIRST_NAME</div>
<div class="t" style="left:325.00px;top:48.80000000000001px;font-size:14.5px;color:#111111;font-weight:bold;transform:scaleX(0.8350);">STATUS</div>
<div class="t" style="left:411.00px;top:48.80000000000001px;font-size:14.5px;color:#111111;font-weight:bold;transform:scaleX(0.8147);">SORTBOOTH_</div>
<div class="t" style="left:544.00px;top:48.80000000000001px;font-size:14.5px;color:#111111;font-weight:bold;transform:scaleX(0.8350);">BOOTH</div>
<div class="t" style="left:677.00px;top:48.80000000000001px;font-size:14.5px;color:#111111;font-weight:bold;transform:scaleX(0.8350);">CONFIRMED</div>
<div class="t" style="left:6.00px;top:92.5px;font-size:14.5px;color:#111111;font-weight:normal;transform:scaleX(0.9050);">1</div>
<div class="t" style="left:103.60px;top:92.5px;font-size:14.5px;color:#111111;font-weight:normal;transform:scaleX(0.9050);">595</div>
<div class="t" style="left:236.60px;top:92.5px;font-size:14.5px;color:#111111;font-weight:normal;transform:scaleX(0.9050);">James</div>
<div class="t" style="left:324.90px;top:92.5px;font-size:14.5px;color:#111111;font-weight:normal;transform:scaleX(0.9124);">Vendor2000</div>
<div class="t" style="left:411.60px;top:92.5px;font-size:14.5px;color:#111111;font-weight:normal;transform:scaleX(0.9050);">212</div>
<div class="t" style="left:544.60px;top:92.5px;font-size:14.5px;color:#111111;font-weight:normal;transform:scaleX(0.9050);">212</div>
<div class="t" style="left:677.60px;top:92.5px;font-size:14.5px;color:#111111;font-weight:normal;transform:scaleX(0.9050);">135</div>
<div class="t" style="left:6.00px;top:121.5px;font-size:14.5px;color:#111111;font-weight:normal;transform:scaleX(0.9050);">2</div>
<div class="t" style="left:103.60px;top:121.5px;font-size:14.5px;color:#111111;font-weight:normal;transform:scaleX(0.9050);">596</div>
<div class="t" style="left:236.60px;top:121.5px;font-size:14.5px;color:#111111;font-weight:normal;transform:scaleX(0.9050);">Jim</div>
<div class="t" style="left:324.90px;top:121.5px;font-size:14.5px;color:#111111;font-weight:normal;transform:scaleX(0.9124);">Vendor2000</div>
<div class="t" style="left:411.60px;top:121.5px;font-size:14.5px;color:#111111;font-weight:normal;transform:scaleX(0.9050);">226</div>
<div class="t" style="left:544.60px;top:121.5px;font-size:14.5px;color:#111111;font-weight:normal;transform:scaleX(0.9050);">226</div>
<div class="t" style="left:677.60px;top:121.5px;font-size:14.5px;color:#111111;font-weight:normal;transform:scaleX(0.9050);">131</div>
<div class="t" style="left:6.00px;top:150.5px;font-size:14.5px;color:#111111;font-weight:normal;transform:scaleX(0.9050);">3</div>
<div class="t" style="left:103.60px;top:150.5px;font-size:14.5px;color:#111111;font-weight:normal;transform:scaleX(0.9050);">168</div>
<div class="t" style="left:236.60px;top:150.5px;font-size:14.5px;color:#111111;font-weight:normal;transform:scaleX(0.9050);">Colin</div>
<div class="t" style="left:324.90px;top:150.5px;font-size:14.5px;color:#111111;font-weight:normal;transform:scaleX(0.9124);">Vendor2001</div>
<div class="t" style="left:411.60px;top:150.5px;font-size:14.5px;color:#111111;font-weight:normal;transform:scaleX(0.9050);">304</div>
<div class="t" style="left:544.60px;top:150.5px;font-size:14.5px;color:#111111;font-weight:normal;transform:scaleX(0.9050);">304</div>
<div class="t" style="left:677.60px;top:150.5px;font-size:14.5px;color:#111111;font-weight:normal;transform:scaleX(0.9050);">54</div>
<div class="t" style="left:6.00px;top:179.5px;font-size:14.5px;color:#111111;font-weight:bold;transform:scaleX(0.8350);">4</div>
<div class="t" style="left:103.60px;top:179.5px;font-size:14.5px;color:#111111;font-weight:normal;transform:scaleX(0.9050);">123</div>
<div class="t" style="left:236.60px;top:179.5px;font-size:14.5px;color:#111111;font-weight:normal;transform:scaleX(0.9050);">J. Clifton</div>
<div class="t" style="left:324.90px;top:179.5px;font-size:14.5px;color:#111111;font-weight:normal;transform:scaleX(0.9124);">Vendor2002</div>
<div class="t" style="left:411.60px;top:179.5px;font-size:14.5px;color:#eef4fa;font-weight:normal;transform:scaleX(0.9050);">319</div>
<div class="t" style="left:544.60px;top:179.5px;font-size:14.5px;color:#111111;font-weight:normal;transform:scaleX(0.9050);">319</div>
<div class="t" style="left:677.60px;top:179.5px;font-size:14.5px;color:#111111;font-weight:normal;transform:scaleX(0.9050);">59</div>
<div class="t" style="left:6.00px;top:208.5px;font-size:14.5px;color:#111111;font-weight:normal;transform:scaleX(0.9050);">5</div>
<div class="t" style="left:103.60px;top:208.5px;font-size:14.5px;color:#111111;font-weight:normal;transform:scaleX(0.9050);">134</div>
<div class="t" style="left:236.60px;top:208.5px;font-size:14.5px;color:#111111;font-weight:normal;transform:scaleX(0.9050);">Gene</div>
<div class="t" style="left:324.90px;top:208.5px;font-size:14.5px;color:#111111;font-weight:normal;transform:scaleX(0.9124);">Vendor2002</div>
<div class="t" style="left:411.60px;top:208.5px;font-size:14.5px;color:#111111;font-weight:normal;transform:scaleX(0.9050);">221</div>
<div class="t" style="left:544.60px;top:208.5px;font-size:14.5px;color:#111111;font-weight:normal;transform:scaleX(0.9050);">221</div>
<div class="t" style="left:677.60px;top:208.5px;font-size:14.5px;color:#111111;font-weight:normal;transform:scaleX(0.9050);">31</div>
<div class="t" style="left:6.00px;top:243.5px;font-size:14.5px;color:#111111;font-weight:normal;transform:scaleX(0.9050);">6</div>
<div class="t" style="left:103.60px;top:243.5px;font-size:14.5px;color:#111111;font-weight:normal;transform:scaleX(0.9050);">161</div>
<div class="t" style="left:236.60px;top:243.5px;font-size:14.5px;color:#111111;font-weight:normal;transform:scaleX(0.8710);">Maxine &amp; Dan</div>
<div class="t" style="left:324.90px;top:243.5px;font-size:14.5px;color:#111111;font-weight:normal;transform:scaleX(0.9124);">Vendor2002</div>
<div class="t" style="left:411.60px;top:243.5px;font-size:14.5px;color:#111111;font-weight:normal;transform:scaleX(0.9050);">501</div>
<div class="t" style="left:544.60px;top:243.5px;font-size:14.5px;color:#111111;font-weight:normal;transform:scaleX(0.9050);">501</div>
<div class="t" style="left:677.60px;top:243.5px;font-size:14.5px;color:#111111;font-weight:normal;transform:scaleX(0.9050);">97</div>
<div class="t" style="left:6.00px;top:284.5px;font-size:14.5px;color:#111111;font-weight:normal;transform:scaleX(0.9050);">7</div>
<div class="t" style="left:103.60px;top:284.5px;font-size:14.5px;color:#111111;font-weight:normal;transform:scaleX(0.9050);">53</div>
<div class="t" style="left:236.60px;top:284.5px;font-size:14.5px;color:#111111;font-weight:normal;transform:scaleX(0.9050);">Peter</div>
<div class="t" style="left:324.90px;top:284.5px;font-size:14.5px;color:#111111;font-weight:normal;transform:scaleX(0.9124);">Vendor2003</div>
<div class="t" style="left:411.60px;top:284.5px;font-size:14.5px;color:#111111;font-weight:normal;transform:scaleX(0.9050);">406</div>
<div class="t" style="left:544.60px;top:284.5px;font-size:14.5px;color:#111111;font-weight:normal;transform:scaleX(0.9050);">406</div>
<div class="t" style="left:677.60px;top:284.5px;font-size:14.5px;color:#111111;font-weight:normal;transform:scaleX(0.9050);">147</div>
<div class="t" style="left:6.00px;top:319.5px;font-size:14.5px;color:#111111;font-weight:normal;transform:scaleX(0.9050);">8</div>
<div class="t" style="left:103.60px;top:319.5px;font-size:14.5px;color:#111111;font-weight:normal;transform:scaleX(0.9050);">188</div>
<div class="t" style="left:236.60px;top:319.5px;font-size:14.5px;color:#111111;font-weight:normal;transform:scaleX(0.9050);">Albert</div>
<div class="t" style="left:324.90px;top:319.5px;font-size:14.5px;color:#111111;font-weight:normal;transform:scaleX(0.9124);">Vendor2003</div>
<div class="t" style="left:411.60px;top:319.5px;font-size:14.5px;color:#111111;font-weight:normal;transform:scaleX(0.9050);">335</div>
<div class="t" style="left:544.60px;top:319.5px;font-size:14.5px;color:#111111;font-weight:normal;transform:scaleX(0.9050);">335</div>
<div class="t" style="left:677.60px;top:319.5px;font-size:14.5px;color:#111111;font-weight:normal;transform:scaleX(0.9050);">156</div>
</div>
<div class="r" style="left:905px;top:422px;width:20px;height:332px;background:#fff"></div>
<svg style="left:909px;top:428px" width="12" height="8" viewBox="0 0 12 8"><path d="M1 7 L6 2 L11 7" fill="none" stroke="#c6c6c6" stroke-width="1.1"/></svg>
<div class="r" style="left:910px;top:442px;width:10px;height:292px;background:#b0b0b0;border-radius:5px"></div>
<div class="r" style="left:910px;top:442px;width:10px;height:163px;background:#3daee9;border-radius:5px"></div>
<svg style="left:909px;top:740px" width="12" height="8" viewBox="0 0 12 8"><path d="M1 1.5 L6 6.5 L11 1.5" fill="none" stroke="#333" stroke-width="1.2"/></svg>
<div class="r" style="left:181px;top:754px;width:724px;height:20px;background:#fff"></div>
<svg style="left:186px;top:758px" width="8" height="12" viewBox="0 0 8 12"><path d="M7 1 L2 6 L7 11" fill="none" stroke="#c6c6c6" stroke-width="1.1"/></svg>
<div class="r" style="left:201px;top:759px;width:684px;height:10px;background:#b0b0b0;border-radius:5px"></div>
<div class="r" style="left:201px;top:759px;width:10px;height:10px;background:#3daee9;border-radius:5px"></div>
<svg style="left:892px;top:758px" width="8" height="12" viewBox="0 0 8 12"><path d="M1.5 1 L6.5 6 L1.5 11" fill="none" stroke="#333" stroke-width="1.2"/></svg>
<div class="r" style="left:949px;top:484px;width:1px;height:1px;background:#8f8b80"></div>
<div class="r" style="left:949px;top:487px;width:1px;height:1px;background:#8f8b80"></div>
<div class="r" style="left:949px;top:490px;width:1px;height:1px;background:#8f8b80"></div>
<div class="r" style="left:580px;top:789px;width:82px;height:31px;border:1px solid #aeaba6;border-radius:3px;background:linear-gradient(#f2f0ed,#e7e4e0);box-shadow:0 1px 1px rgba(0,0,0,.1)"></div>
<div class="t" style="left:617.20px;top:795.8px;font-size:14.5px;color:#111111;font-weight:normal;transform:scaleX(0.8504);">Back</div>
<svg style="left:600px;top:797px" width="10" height="14" viewBox="0 0 10 14"><path d="M8 1 L2.5 7 L8 13" fill="none" stroke="#333" stroke-width="1.1"/></svg>
<div class="r" style="left:670px;top:789px;width:82px;height:31px;border:1px solid #aeaba6;border-radius:3px;background:linear-gradient(#fbfbfa,#efeeeb);box-shadow:0 1px 1px rgba(0,0,0,.1)"></div>
<div class="t" style="left:707.70px;top:795.8px;font-size:14.5px;color:#111111;font-weight:normal;transform:scaleX(0.9241);">Next</div>
<svg style="left:690px;top:797px" width="10" height="14" viewBox="0 0 10 14"><path d="M2 1 L7.5 7 L2 13" fill="none" stroke="#333" stroke-width="1.1"/></svg>
<div class="r" style="left:760px;top:789px;width:82px;height:31px;border:1px solid #dcd9d4;border-radius:3px;background:linear-gradient(#efedea,#e9e6e2);box-shadow:0 1px 1px rgba(0,0,0,.1)"></div>
<div class="t" style="left:794.00px;top:795.8px;font-size:14.5px;color:#b9b7b3;font-weight:normal;transform:scaleX(0.8720);">Finish</div>
<svg style="left:775px;top:797px" width="14" height="14" viewBox="0 0 14 14"><path d="M1 7.5 L5 11.5 L13 2.5" fill="none" stroke="#bdbbb7" stroke-width="1.1"/></svg>
<div class="r" style="left:850px;top:789px;width:82px;height:31px;border:1px solid #97948f;border-radius:3px;background:linear-gradient(#f2f0ed,#e7e4e0);box-shadow:0 1px 1px rgba(0,0,0,.1)"></div>
<div class="t" style="left:882.00px;top:795.8px;font-size:14.5px;color:#111111;font-weight:normal;transform:scaleX(0.8461);">Cancel</div>
<svg style="left:862px;top:797px" width="14" height="14" viewBox="0 0 14 14"><circle cx="7" cy="7" r="5.2" fill="none" stroke="#3a3a3a" stroke-width="1.05"/><path d="M3.4 3.4 L10.6 10.6" stroke="#3a3a3a" stroke-width="1.05"/></svg></body></html>
